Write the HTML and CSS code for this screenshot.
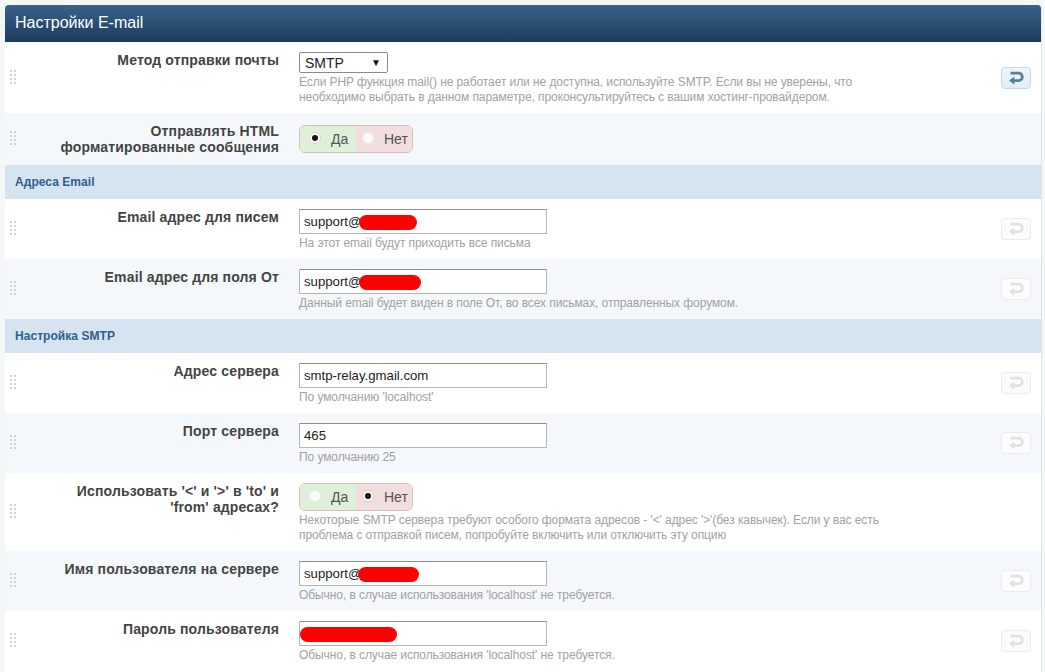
FILE: index.html
```html
<!DOCTYPE html>
<html lang="ru">
<head>
<meta charset="utf-8">
<title>Настройки E-mail</title>
<link rel="stylesheet" href="styles.css">
</head>
<body>
<svg class="defs" width="0" height="0" aria-hidden="true">
  <symbol id="revert" viewBox="0 0 16 14">
    <path d="M2.5 2.2H10.6a3.7 3.7 0 0 1 0 7.4H5" fill="none" stroke="currentColor" stroke-width="2.8"/>
    <path d="M6.4 5.4L1 9.6l5.4 4.2z" fill="currentColor"/>
  </symbol>
  <symbol id="grip" viewBox="0 0 7 14">
    <g fill="#d0d3d3">
      <rect x="0" y="0" width="2" height="2"/><rect x="4" y="0" width="2" height="2"/>
      <rect x="0" y="4" width="2" height="2"/><rect x="4" y="4" width="2" height="2"/>
      <rect x="0" y="8" width="2" height="2"/><rect x="4" y="8" width="2" height="2"/>
      <rect x="0" y="12" width="2" height="2"/><rect x="4" y="12" width="2" height="2"/>
    </g>
  </symbol>
</svg>
<section class="panel">
  <h1 class="panel-title">Настройки E-mail</h1>

  <div class="row h71">
    <svg class="grip"><use href="#grip"/></svg>
    <div class="label">Метод отправки почты</div>
    <div class="control">
      <div class="select-box"><span>SMTP</span><span class="select-arrow">▼</span></div>
      <p class="desc">Если PHP функция mail() не работает или не доступна, используйте SMTP. Если вы не уверены, что<br>необходимо выбрать в данном параметре, проконсультируйтесь с вашим хостинг-провайдером.</p>
    </div>
    <button class="revert active"><svg><use href="#revert"/></svg></button>
  </div>

  <div class="row alt h52">
    <svg class="grip"><use href="#grip"/></svg>
    <div class="label">Отправлять HTML<br>форматированные сообщения</div>
    <div class="control">
      <div class="yesno low">
        <span class="yes"><i class="radio on"></i>Да</span><span class="no"><i class="radio"></i>Нет</span>
      </div>
    </div>
  </div>

  <h2 class="section">Адреса Email</h2>

  <div class="row">
    <svg class="grip"><use href="#grip"/></svg>
    <div class="label">Email адрес для писем</div>
    <div class="control">
      <div class="field">support@<span class="redact r1"></span></div>
      <p class="desc">На этот email будут приходить все письма</p>
    </div>
    <button class="revert"><svg><use href="#revert"/></svg></button>
  </div>

  <div class="row alt">
    <svg class="grip"><use href="#grip"/></svg>
    <div class="label">Email адрес для поля От</div>
    <div class="control">
      <div class="field">support@<span class="redact r2"></span></div>
      <p class="desc">Данный email будет виден в поле От, во всех письмах, отправленных форумом.</p>
    </div>
    <button class="revert"><svg><use href="#revert"/></svg></button>
  </div>

  <h2 class="section">Настройка SMTP</h2>

  <div class="row">
    <svg class="grip"><use href="#grip"/></svg>
    <div class="label">Адрес сервера</div>
    <div class="control">
      <div class="field">smtp-relay.gmail.com</div>
      <p class="desc">По умолчанию 'localhost'</p>
    </div>
    <button class="revert"><svg><use href="#revert"/></svg></button>
  </div>

  <div class="row alt">
    <svg class="grip"><use href="#grip"/></svg>
    <div class="label">Порт сервера</div>
    <div class="control">
      <div class="field">465</div>
      <p class="desc">По умолчанию 25</p>
    </div>
    <button class="revert"><svg><use href="#revert"/></svg></button>
  </div>

  <div class="row h78">
    <svg class="grip"><use href="#grip"/></svg>
    <div class="label">Использовать '&lt;' и '&gt;' в 'to' и<br>'from' адресах?</div>
    <div class="control">
      <div class="yesno">
        <span class="yes"><i class="radio"></i>Да</span><span class="no"><i class="radio on"></i>Нет</span>
      </div>
      <p class="desc">Некоторые SMTP сервера требуют особого формата адресов - '&lt;' адрес '&gt;'(без кавычек). Если у вас есть<br>проблема с отправкой писем, попробуйте включить или отключить эту опцию</p>
    </div>
  </div>

  <div class="row alt">
    <svg class="grip"><use href="#grip"/></svg>
    <div class="label">Имя пользователя на сервере</div>
    <div class="control">
      <div class="field">support@<span class="redact r3"></span></div>
      <p class="desc">Обычно, в случае использования 'localhost' не требуется.</p>
    </div>
    <button class="revert"><svg><use href="#revert"/></svg></button>
  </div>

  <div class="row">
    <svg class="grip"><use href="#grip"/></svg>
    <div class="label">Пароль пользователя</div>
    <div class="control">
      <div class="field"><span class="redact r4"></span></div>
      <p class="desc">Обычно, в случае использования 'localhost' не требуется.</p>
    </div>
    <button class="revert"><svg><use href="#revert"/></svg></button>
  </div>
</section>
</body>
</html>
```

FILE: styles.css
```css
* { box-sizing: border-box; }
html, body { margin: 0; height: 100%; overflow: hidden; }
body {
  background: #f4f7f8;
  padding: 5px 3px 0 5px;
  font-family: "Liberation Sans", Arial, sans-serif;
}
.defs { position: absolute; }
.panel {
  background: #fff;
  border-right: 1px solid #dfe5e8;
  border-radius: 4px 4px 0 0;
  height: 667px;
  overflow: hidden;
}
.panel-title {
  margin: 0;
  height: 37px;
  padding-left: 10px;
  font-size: 16px;
  font-weight: normal;
  line-height: 36px;
  color: #fff;
  background: linear-gradient(#38628a, #1d3b5c);
}
.row {
  display: flex;
  align-items: flex-start;
  height: 60px;
  padding-top: 10px;
  background: #fff;
}
.row.h71 { height: 71px; }
.row.h52 { height: 52px; }
.row.h78 { height: 78px; }
.row.alt { background: #f4f8fa; }
.grip {
  flex: none;
  width: 7px;
  height: 14px;
  margin: -12px 0 0 5px;
  align-self: center;
}
.label {
  flex: none;
  width: 262px;
  text-align: right;
  font-size: 14px;
  font-weight: bold;
  line-height: 16px;
  color: #444;
  letter-spacing: 0.15px;
}
.control {
  flex: none;
  width: 702px;
  margin-left: 20px;
}
.select-box {
  display: flex;
  justify-content: space-between;
  align-items: center;
  width: 89px;
  height: 21px;
  padding: 0 6px 0 5px;
  background: #fff;
  border: 1px solid #8a8a8a;
  border-radius: 2px;
  font-size: 14px;
  color: #222;
}
.select-arrow { font-size: 10px; color: #111; }
.desc {
  margin: 2px 0 0;
  font-size: 12px;
  line-height: 15px;
  letter-spacing: -0.08px;
  color: #a2a2a2;
}
.field {
  position: relative;
  width: 248px;
  height: 25px;
  padding-left: 4px;
  background: #fff;
  border: 1px solid #b5b5b5;
  border-top-color: #8f8f8f;
  border-radius: 1px;
  font-size: 13.2px;
  line-height: 24px;
  color: #222;
}
.redact {
  position: absolute;
  top: 5px;
  height: 15px;
  background: #fe0000;
  border-radius: 8px;
}
.r1 { left: 59px; width: 58px; }
.r2 { left: 59px; width: 62px; }
.r3 { left: 58px; width: 61px; }
.r4 { left: 0; width: 97px; }
.yesno {
  display: inline-flex;
  height: 28px;
  border: 1px solid #d9bcbc;
  border-radius: 6px;
  overflow: hidden;
  font-size: 14px;
  color: #555;
}
.yesno.low { margin-top: 2px; }
.yes, .no {
  display: flex;
  align-items: center;
  height: 100%;
}
.yes { width: 56px; padding-left: 9px; background: #dff0d8; }
.no { width: 56px; padding-left: 6px; background: #f2dede; }
.radio {
  display: inline-block;
  flex: none;
  position: relative;
  width: 12px;
  height: 12px;
  margin: -3px 10px 0 0;
  background: #fbfbfb;
  border: 1px solid #eaeaea;
  border-radius: 50%;
}
.radio.on { border-color: #e3d5b8; background: #fff; }
.radio.on::after {
  content: "";
  position: absolute;
  top: 2px;
  left: 2px;
  width: 6px;
  height: 6px;
  border-radius: 50%;
  background: #111;
}
.revert {
  flex: none;
  display: flex;
  align-items: center;
  justify-content: center;
  align-self: center;
  width: 30px;
  height: 22px;
  margin: -10px 0 0 0;
  padding: 0;
  background: #fbfcfc;
  border: 1px solid #e8ecec;
  border-radius: 4px;
  color: #e0e3e3;
}
.revert svg { width: 16px; height: 14px; }
.revert.active {
  background: linear-gradient(#f0f5f9, #e3edf5);
  border-color: #c8d8e4;
  color: #55809a;
}
.section {
  margin: 0;
  height: 34px;
  padding-left: 10px;
  background: #d6e3f0;
  font-size: 12px;
  font-weight: bold;
  line-height: 35px;
  letter-spacing: 0.05px;
  color: #30608c;
}
```
